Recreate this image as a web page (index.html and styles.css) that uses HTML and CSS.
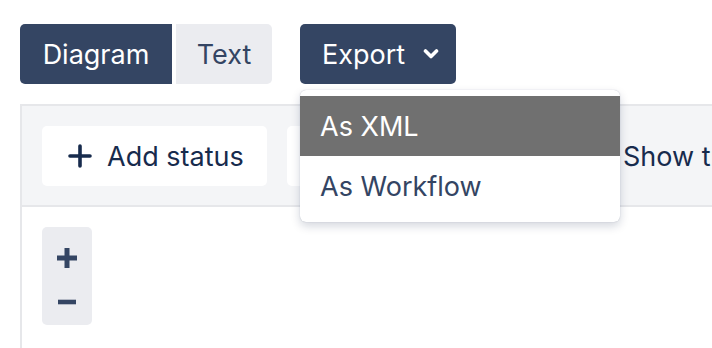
FILE: index.html
```html
<!DOCTYPE html>
<html>
<head>
<meta charset="utf-8">
<link rel="stylesheet" href="styles.css">
</head>
<body>
<div class="page">
  <div class="topbar">
    <div class="seg">
      <button class="seg-btn active">Diagram</button>
      <button class="seg-btn">Text</button>
    </div>
    <div class="export-wrap">
      <button class="export">Export
        <svg class="chev" width="16" height="16" viewBox="0 0 16 16"><path d="M2.5 5 L8 10.5 L13.5 5" fill="none" stroke="#fff" stroke-width="3.6" stroke-linecap="round" stroke-linejoin="round"/></svg>
      </button>
      <div class="menu">
        <div class="menu-item hover">As XML</div>
        <div class="menu-item">As Workflow</div>
      </div>
    </div>
  </div>
  <div class="panel">
    <div class="toolbar">
      <button class="tool-btn add">
        <svg width="24" height="24" viewBox="0 0 24 24"><path d="M12 2 V22 M2 12 H22" stroke="#172B4D" stroke-width="3.6" stroke-linecap="round"/></svg>
        <span>Add status</span>
      </button>
      <button class="tool-btn blank">Add transition</button>
      <span class="show">Show transition labels</span>
    </div>
    <div class="canvas">
      <div class="zoom">
        <svg width="20" height="20" viewBox="0 0 20 20"><path d="M10 0 V20 M0 10 H20" stroke="#344563" stroke-width="5"/></svg>
        <svg width="20" height="20" viewBox="0 0 20 20"><path d="M1 10 H19" stroke="#344563" stroke-width="4.6"/></svg>
      </div>
    </div>
  </div>
</div>
</body>
</html>
```

FILE: styles.css
```css
* { box-sizing: border-box; }
html, body { margin: 0; padding: 0; background: #fff; }
body {
  width: 712px;
  height: 348px;
  overflow: hidden;
  font-family: Inter, "Noto Sans", sans-serif;
  font-size: 27px;
  color: #172B4D;
}
button { font-family: inherit; font-size: 27px; border: 0; cursor: pointer; padding: 0; }
.page { width: 712px; overflow: hidden; height: 348px; }
.topbar {
  display: flex;
  padding: 24px 0 0 20px;
  gap: 28px;
  height: 84px;
}
.seg { display: flex; gap: 4px; }
.seg-btn {
  height: 60px;
  background: #EBECF0;
  color: #344563;
  border-radius: 0 5px 5px 0;
}
.seg-btn.active {
  background: #344563;
  color: #fff;
  border-radius: 5px 0 0 5px;
  width: 152px;
}
.seg-btn:not(.active) { width: 96px; }
.export-wrap { position: relative; }
.export {
  height: 60px;
  width: 156px;
  background: #344563;
  color: #fff;
  border-radius: 5px;
  display: flex;
  align-items: center;
  padding: 0 0 0 22px;
}
.chev { margin-left: auto; margin-right: 17px; }
.menu {
  position: absolute;
  top: 66px;
  left: 0;
  width: 320px;
  background: #fff;
  border-radius: 6px;
  padding: 6px 0;
  box-shadow: 0 4px 10px rgba(9, 30, 66, 0.18), 0 0 1px rgba(9, 30, 66, 0.3);
  z-index: 5;
}
.menu-item {
  height: 60px;
  display: flex;
  align-items: center;
  padding-left: 20px;
  color: #344563;
}
.menu-item.hover { background: #707070; color: #fff; }
.panel {
  margin: 20px 0 0 20px;
  width: 1000px;
  border-left: 2px solid #E6E7EA;
  border-top: 2px solid #E6E7EA;
}
.toolbar {
  display: flex;
  align-items: center;
  gap: 20px;
  padding: 20px 0 19px 20px;
  background: #F4F5F7;
  border-bottom: 2px solid #E6E7EA;
}
.tool-btn {
  height: 60px;
  background: #fff;
  color: #172B4D;
  border-radius: 5px;
  display: flex;
  align-items: center;
}
.add { width: 225px; padding-left: 26px; gap: 15px; }
.blank { width: 316px; color: #fff; }
.show { color: #172B4D; white-space: nowrap; }
.canvas {
  background: #fff;
  height: 200px;
  padding: 20px 0 0 20px;
}
.zoom {
  width: 50px;
  height: 98px;
  background: #EBECF0;
  border-radius: 5px;
  display: flex;
  flex-direction: column;
  align-items: center;
  padding-top: 21px;
  gap: 24px;
}
```
